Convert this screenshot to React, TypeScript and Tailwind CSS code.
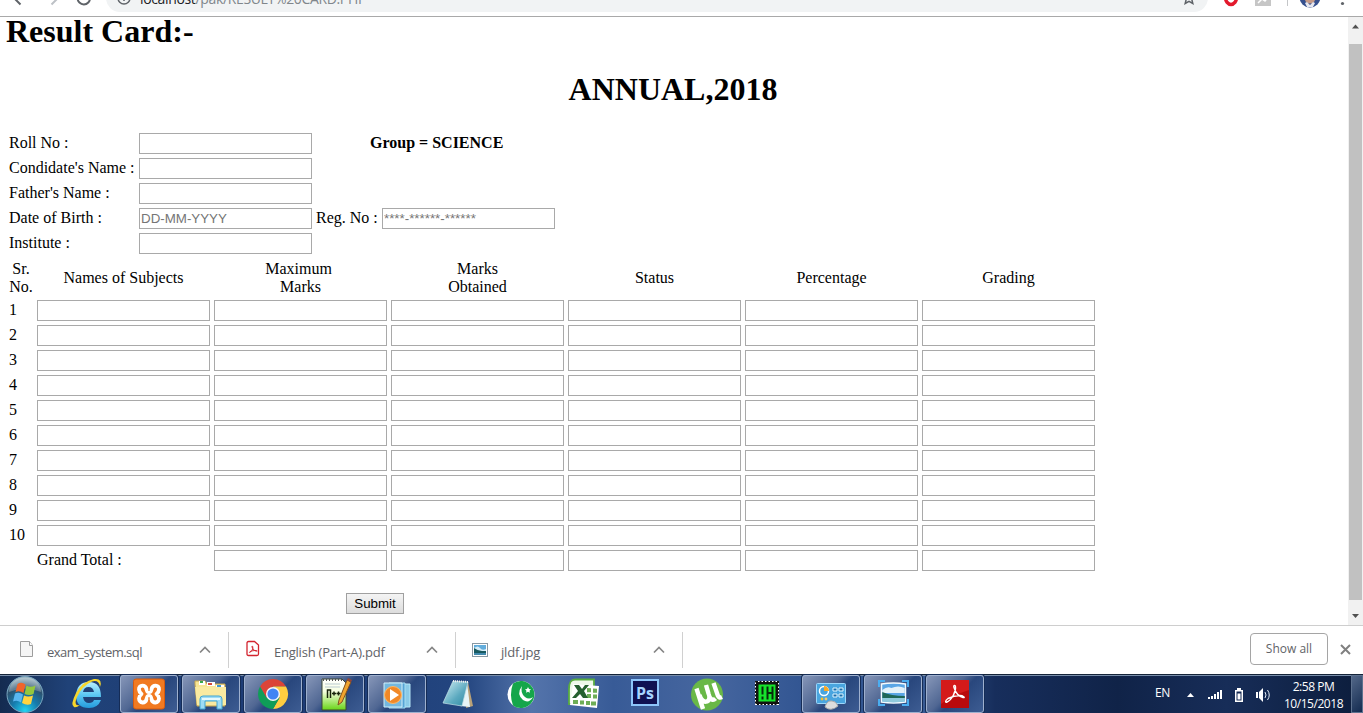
import React from "react";

const inputClass =
  "block h-[21px] w-[173px] rounded-none border border-[#a9a9a9] bg-white px-px font-['Liberation_Sans',sans-serif] text-[13.33px] leading-[17px] text-black outline-none placeholder:text-[#757575]";

function Field({ placeholder }: { placeholder?: string }) {
  return <input type="text" placeholder={placeholder} className={inputClass} />;
}

function BrowserBar() {
  return (
    <header className="flex h-[17px] shrink-0 items-end overflow-hidden border-b border-[#a9a9a9] bg-white">
      <div className="flex h-[38px] w-full shrink-0 items-center">
        <svg width="106" height="38" viewBox="0 -22 106 38" fill="none" strokeWidth="2" className="shrink-0">
          <path d="M20.500 4.500 L14 -2 L20.500 -8.500 M14 -2 H28" stroke="#5f6368" />
          <path d="M51.500 4.500 L58 -2 L51.500 -8.500 M58 -2 H44" stroke="#bdc1c6" />
          <path d="M90 -2 A6.200 6.200 0 1 1 84 -8" stroke="#5f6368" />
        </svg>
        <div className="mt-[2px] flex h-[28px] w-[1102px] shrink-0 items-center rounded-full bg-[#f1f3f4] pl-[11px]">
          <svg width="14" height="14" viewBox="0 0 14 14" fill="none" stroke="#5f6368" strokeWidth="1.5">
            <circle cx="7" cy="7" r="6" />
            <path d="M7 6v4M7 3.500v1.300" />
          </svg>
          <span className="ml-[9px] mt-[1px] whitespace-nowrap font-['Open_Sans',sans-serif] text-[14px] leading-[20px] tracking-[-0.350px] text-[#80868b]">
            <span className="text-[#202124]">localhost</span>/pak/RESULT%20CARD.PHP
          </span>
          <svg width="14" height="14" viewBox="0 0 14 14" fill="none" stroke="#5f6368" strokeWidth="1.500" className="ml-auto mr-[12px]">
            <path d="M7 1l1.800 4 4.200.4-3.200 2.900 1 4.200L7 10.300l-3.800 2.200 1-4.200L1 5.400l4.200-.4z" />
          </svg>
        </div>
        <svg width="155" height="38" viewBox="1208 -22 155 38" className="shrink-0">
          <ellipse cx="1231" cy="-2.500" rx="5.500" ry="7" fill="none" stroke="#e3192c" strokeWidth="3.500" />
          <rect x="1255" y="-10" width="16" height="16" fill="#c6c6c6" />
          <path d="M1258 3l4-4 3 2 4-5" stroke="#fff" strokeWidth="1.500" fill="none" />
          <path d="M1287.500 -10v16" stroke="#c4c6c8" />
          <circle cx="1310" cy="-3" r="10.500" fill="#36508e" />
          <path d="M1303 -4q7-5 14 0l-3 6q-4 3-8 0z" fill="#c59a88" />
          <path d="M1305 3l2-1 3 3 3-3 2 1-2 4h-6z" fill="#e6e7ef" />
          <circle cx="1342.500" cy="3.500" r="1.600" fill="#5f6368" />
          <circle cx="1342.500" cy="-2.500" r="1.600" fill="#5f6368" />
        </svg>
      </div>
    </header>
  );
}

function Scrollbar() {
  return (
    <div className="flex w-[15px] shrink-0 flex-col items-center bg-[#f1f1f1]">
      <svg width="15" height="27" viewBox="0 0 15 27" className="shrink-0">
        <path d="M4 11.500h7L7.500 7.500z" fill="#505050" />
      </svg>
      <div className="w-[13px] flex-1 bg-[#c1c1c1]" />
      <svg width="15" height="25" viewBox="0 0 15 25" className="shrink-0">
        <path d="M4 14h7l-3.500 4z" fill="#505050" />
      </svg>
    </div>
  );
}

const headings = [
  { text: "Sr. No.", className: "" },
  { text: "Names of Subjects", className: "" },
  { text: "Maximum Marks", className: "w-[80px]" },
  { text: "Marks Obtained", className: "w-[80px]" },
  { text: "Status", className: "" },
  { text: "Percentage", className: "" },
  { text: "Grading", className: "" },
];
const serials = [1, 2, 3, 4, 5, 6, 7, 8, 9, 10];
const columns = [0, 1, 2, 3, 4, 5];

function FieldRow({ label, placeholder, children }: { label: string; placeholder?: string; children?: React.ReactNode }) {
  return (
    <div className="flex h-[21px] items-center">
      <label className="w-[130px] whitespace-nowrap pb-[2px]">{label}</label>
      <Field placeholder={placeholder} />
      {children}
    </div>
  );
}

function ResultForm() {
  return (
    <main className="min-w-0 flex-1 font-['Liberation_Serif',serif] text-[16px] leading-[18px] text-black">
      <h1 className="ml-[6px] h-[58px] text-[32px] font-bold leading-[28px]">Result Card:-</h1>
      <h1 className="ml-[-2px] h-[58px] text-center text-[32px] font-bold leading-[28px]">ANNUAL,2018</h1>
      <form onSubmit={(e) => e.preventDefault()} className="pl-[9px]">
        <section className="flex flex-col gap-1">
          <FieldRow label="Roll No :">
            <b className="ml-[58px] pb-[2px]">Group = SCIENCE</b>
          </FieldRow>
          <FieldRow label="Condidate's Name :" />
          <FieldRow label="Father's Name :" />
          <FieldRow label="Date of Birth :" placeholder="DD-MM-YYYY">
            <label className="ml-1 w-[66px] whitespace-nowrap pb-[2px]">Reg. No :</label>
            <Field placeholder="****-******-******" />
          </FieldRow>
          <FieldRow label="Institute :" />
        </section>
        <section className="mt-[6px] grid grid-cols-[24px_repeat(6,173px)] gap-x-1 gap-y-1">
          {headings.map((h) => (
            <div key={h.text} className="flex h-[36px] items-center justify-center text-center">
              {h.text === "Maximum Marks" ? (
                <span className={h.className}>
                  <span className="mr-1">Maximum</span> Marks
                </span>
              ) : (
                <span className={h.className}>{h.text}</span>
              )}
            </div>
          ))}
          {serials.map((n) => (
            <React.Fragment key={n}>
              <span className="flex h-[21px] items-center pb-[2px]">{n}</span>
              {columns.map((c) => (
                <Field key={c} />
              ))}
            </React.Fragment>
          ))}
          <span />
          <span className="flex h-[21px] items-center pb-[2px]">Grand Total :</span>
          {columns.slice(1).map((c) => (
            <Field key={c} />
          ))}
        </section>
        <button className="ml-[337px] mt-[22px] block h-[21px] w-[58px] border border-[#a0a0a0] bg-linear-to-b from-[#f4f4f4] to-[#dddddd] text-center font-['Liberation_Sans',sans-serif] text-[13.330px] leading-[18px]">
          Submit
        </button>
      </form>
    </main>
  );
}

function FileIcon() {
  return (
    <svg width="16" height="18" viewBox="0 0 16 18" fill="#f5f5f5" stroke="#9d9d9d">
      <path d="M1.500 1.500h9l3 4v11h-12z" />
      <path d="M10.500 1.500v4h3" fill="#fff" />
    </svg>
  );
}

function PdfIcon() {
  return (
    <svg width="16" height="18" viewBox="0 0 16 18" fill="none" stroke="#d3242f" strokeWidth="1.300">
      <path d="M3.500 1.500h6l4 3.500v9q0 1.500-1.500 1.500H3.500Q2 15.500 2 14V3q0-1.500 1.500-1.500z" />
      <path d="M4.500 12.500c2.500-1 3.500-3.500 3.300-5.500 0-1.500-1.200-1-.7.2.8 2 2 3.500 4.400 4 1.200.4.800-.8-.5-.7-3 0-7 .8-6.500 2z" strokeWidth="1" />
    </svg>
  );
}

function ImageIcon() {
  return (
    <svg width="16" height="18" viewBox="0 0 16 18">
      <rect x=".5" y="3.500" width="15" height="13" fill="#fff" stroke="#8898a3" />
      <path d="M2 5h12v10H2z" fill="#62addc" />
      <path d="M2 8q4-3 6 0t6 1v2H2z" fill="#d5edf8" />
      <path d="M2 8q4 3 8 3h4v2H2z" fill="#195a60" />
      <path d="M2 13h12v2H2z" fill="#4189ad" />
    </svg>
  );
}

const downloads = [
  { name: "exam_system.sql", icon: <FileIcon />, width: "w-[229px] pl-[19px]", text: "ml-[12px] tracking-[-0.520px]" },
  { name: "English (Part-A).pdf", icon: <PdfIcon />, width: "w-[227px] pl-[16px]", text: "ml-[13px] tracking-[-0.230px]" },
  { name: "jldf.jpg", icon: <ImageIcon />, width: "w-[227px] pl-[16px]", text: "ml-[13px] tracking-[-0.200px]" },
];

function DownloadShelf() {
  return (
    <section className="flex h-[49px] shrink-0 items-center border-t border-[#cecece] bg-white font-['Open_Sans',sans-serif] text-[13px] text-[#5f6368]">
      {downloads.map((d) => (
        <div key={d.name} className={`flex h-[36px] shrink-0 items-center border-r border-[#d0d0d0] ${d.width}`}>
          <span className="-mt-[2px]">{d.icon}</span>
          <span className={`mt-[6px] whitespace-nowrap ${d.text}`}>{d.name}</span>
          <svg width="12" height="8" viewBox="0 0 12 8" fill="none" stroke="#858585" strokeWidth="1.700" className="ml-auto mr-[17px]">
            <path d="M1 6.500l5-5 5 5" />
          </svg>
        </div>
      ))}
      <button className="mb-[2px] ml-auto h-[32px] w-[78px] rounded-[4px] border border-[#a5a5a5] text-[12px] font-medium text-[#5f6368]">
        Show all
      </button>
      <svg width="11" height="11" viewBox="0 0 11 11" stroke="#808080" strokeWidth="2" className="mb-[2px] ml-[12px] mr-[12px]">
        <path d="M1 1l9 9M10 1l-9 9" />
      </svg>
    </section>
  );
}

function StartOrb() {
  return (
    <svg width="38" height="38" viewBox="0 0 38 38">
      <defs>
        <radialGradient id="orb" cx=".5" cy=".95" r=".9">
          <stop offset="0" stopColor="#22d5f2" />
          <stop offset=".4" stopColor="#167cae" />
          <stop offset=".75" stopColor="#2c526f" />
          <stop offset="1" stopColor="#94b0bd" />
        </radialGradient>
      </defs>
      <circle cx="19" cy="19.500" r="18" fill="url(#orb)" stroke="#78a6c0" />
      <path d="M3 17Q4 3 19 2.500 34 3 35 17 19 10 3 17z" fill="#fff" opacity=".25" />
      <path d="M11.500 9q4-2.500 8 .5l-2 8.500q-4-3-8-1z" fill="#f0642b" />
      <path d="M20.500 10.500q4 2.500 9 0l-2 8.500q-4 2-9 0z" fill="#94c83d" />
      <path d="M9 18.500q4-2 8 1l-2 8q-4-3-8-1z" fill="#59b7f1" />
      <path d="M18 20.500q4 2 9 0l-2 8.500q-4 2-9-1z" fill="#ffd440" />
    </svg>
  );
}

function ExplorerE() {
  return (
    <svg width="38" height="38" viewBox="0 0 38 38">
      <defs>
        <linearGradient id="ie" x2="0" y2="1">
          <stop stopColor="#b9efff" />
          <stop offset=".5" stopColor="#5cc8f4" />
          <stop offset="1" stopColor="#249bdc" />
        </linearGradient>
      </defs>
      <path d="M33 22H15q1 6 6 6 4 0 5-3h7q-3 8-12 8-13 0-13-13Q9 7 21 7q12 0 12 15zM15 17h11q-1-5-5.500-5T15 17z" fill="url(#ie)" fillRule="evenodd" />
      <path d="M32 12Q35 3 26 4 15 6 8 18 2 30 6 32q2 1 6-2-7 2-3-8Q14 11 24 6.500q7-2 8 5.500z" fill="#f7d62b" />
    </svg>
  );
}

function XamppIcon() {
  return (
    <svg width="38" height="38" viewBox="0 0 38 38">
      <rect x="3.500" y="4" width="31" height="30" rx="2.500" fill="#f17a21" stroke="#d95b0c" />
      <g fill="none" stroke="#fff" strokeWidth="3.800" strokeLinejoin="round" strokeLinecap="round">
        <path d="M16.500 14.500C16 9 8.500 9.500 9 14.500q.2 2.500 2.500 4.500Q9 21 9 23.500c0 5 7 5.500 7.500.5" />
        <path d="M21.500 14.500C22 9 29.500 9.500 29 14.500q-.2 2.500-2.500 4.500 2.500 2 2.500 4.500c0 5-7 5.500-7.500.5" />
        <path d="M16.500 14.500q0 3 2.500 3t2.500-3M16.500 24q0-3.500 2.500-3.500t2.500 3.500" strokeWidth="3" />
      </g>
    </svg>
  );
}

function FolderIcon() {
  return (
    <svg width="38" height="38" viewBox="0 0 38 38">
      <path d="M3 9V6h10l2 3h18v22H5z" fill="#f7e594" stroke="#c7a850" />
      <path d="M7 6h6v4H7z" fill="#fff" />
      <path d="M8 6h3v2H8z" fill="#39a94c" />
      <path d="M15 7h8v4h-8z" fill="#fff" />
      <path d="M16 8h4v2h-4z" fill="#d4493b" />
      <path d="M24 10h8v3h-8z" fill="#fff" />
      <path d="M25 10h4v2h-4z" fill="#4099d2" />
      <path d="M3 12h31v18H5z" fill="#f9eaa1" />
      <path d="M8 34V24q0-3 3-3h16q3 0 3 3v10h-5v-8H13v8z" fill="#9ddcf5" stroke="#41a6d3" />
      <path d="M10 24h18" stroke="#e5f9ff" strokeWidth="2" />
    </svg>
  );
}

function ChromeIcon() {
  return (
    <svg width="38" height="38" viewBox="0 0 38 38">
      <path d="M6.010 11.500A15 15 0 0 1 32 11.500H19L12.500 22.800z" fill="#db4437" />
      <path d="M32 11.500A15 15 0 0 1 19 34l6.500-11.300L19 11.500z" fill="#ffcd40" />
      <path d="M19 34A15 15 0 0 1 6.010 11.500l6.500 11.200h13z" fill="#0f9d58" />
      <circle cx="19" cy="19" r="7" fill="#f4f6fa" />
      <circle cx="19" cy="19" r="5.600" fill="#4285f4" />
    </svg>
  );
}

function NotepadPlusIcon() {
  return (
    <svg width="38" height="38" viewBox="0 0 38 38">
      <defs>
        <linearGradient id="npp" x2="0" y2="1">
          <stop stopColor="#fff" />
          <stop offset=".4" stopColor="#f6ffe0" />
          <stop offset="1" stopColor="#68d516" />
        </linearGradient>
      </defs>
      <path d="M6 4h20l4 4v27H6z" fill="url(#npp)" stroke="#3c4934" />
      <path d="M7 5h19" stroke="#555" strokeDasharray="1 2" strokeWidth="2" />
      <path d="M9 9h15M9 12h15" stroke="#bacbd1" />
      <path d="M11.500 23v-8h3v8M16 18.500h4M18 16.500v4M20.500 18.500h4M22.500 16.500v4" fill="none" stroke="#17240b" strokeWidth="1.500" />
      <path d="M22 30l1-5L31 5l4 2-9 20z" fill="#efa52e" stroke="#815021" />
      <path d="M31 5l1-2 4 2-1 2z" fill="#984536" />
    </svg>
  );
}

function MediaPlayerIcon() {
  return (
    <svg width="38" height="38" viewBox="0 0 38 38">
      <path d="M15 9h17v23H15z" fill="#8acae7" stroke="#b7e8f8" />
      <path d="M11 8h16v25H11z" fill="#56a3d5" stroke="#a7def3" />
      <path d="M6 8h18v24H6z" fill="#74b8df" stroke="#d1effa" />
      <circle cx="15" cy="20" r="8.500" fill="#f18827" stroke="#ffba67" />
      <path d="M12 14l9 6-9 6z" fill="#fff" />
    </svg>
  );
}

function NotepadIcon() {
  return (
    <svg width="38" height="38" viewBox="0 0 38 38">
      <defs>
        <linearGradient id="notes" x2="1" y2="1">
          <stop stopColor="#d4f1f5" />
          <stop offset=".6" stopColor="#5ba9bf" />
          <stop offset="1" stopColor="#2f8aa3" />
        </linearGradient>
      </defs>
      <path d="M28 7l5 24-7 2z" fill="#b9a278" />
      <path d="M27 7l3 25-10-1z" fill="#e6f4f7" />
      <path d="M13 6l15 1-6 24L3 28z" fill="url(#notes)" stroke="#c3e1e8" strokeWidth=".7" />
      <path d="M13 6l15 1" stroke="#eee" strokeWidth="2" strokeDasharray="1 1" />
    </svg>
  );
}

function FlagIcon() {
  return (
    <svg width="38" height="38" viewBox="0 0 38 38">
      <circle cx="19" cy="19.500" r="13.500" fill="#fff" />
      <path d="M11 8.500a13.500 13.500 0 1 1 0 22q-4-11 0-22z" fill="#15a64a" />
      <path d="M20 11q-6 8 1 14 6 4 10-3-4 3-8 0-5-4-3-11z" fill="#fff" />
      <path d="M26 12l1 2 2 .2-1.500 1.500.5 2-2-1-2 1 .5-2-1.500-1.500 2-.2z" fill="#fff" />
    </svg>
  );
}

function ExcelIcon() {
  return (
    <svg width="38" height="38" viewBox="0 0 38 38">
      <path d="M11 4.500h19V29H5V14Q5 4.500 11 4.500z" fill="#eef9e9" stroke="#59ad41" strokeWidth="1.800" />
      <path d="M9 9l26 2-2 22-27-3z" fill="#fff" />
      <path d="M23 13l4 .3v4h-4zm6 .5l4 .3v4h-4zM23 19h4v4h-4zm6 .5h4v4h-4zM9 25h5v4H9zm7 .5h4v4h-4zm6 .5h4v4h-4zm5 .5h5v4h-5z" fill="#6eae56" />
      <path d="M10 10h5l3 4 3-4h4l-5 6 4 7h-5l-3-4-4 4H8l6-7z" fill="#25602f" />
    </svg>
  );
}

function PhotoshopIcon() {
  return (
    <span className="mb-[3px] flex h-[27px] w-[28px] items-center justify-center border-2 border-[#8dc5fa] bg-[#101253] font-['Open_Sans',sans-serif] text-[16px] font-bold leading-none text-[#a5d4ff]">
      Ps
    </span>
  );
}

function TorrentIcon() {
  return (
    <svg width="38" height="38" viewBox="0 0 38 38">
      <circle cx="19" cy="19.500" r="16" fill="#69b847" />
      <path d="M8.500 13.500L15 34M11.500 20q2.500 8 7.500 6.500 4-2 1.500-8L18 10M21 21q3 6 6.500 2.500M25.500 8l4.500 13q1 2.500 4 1" fill="none" stroke="#fff" strokeWidth="4.400" />
    </svg>
  );
}

function ChipIcon() {
  return (
    <svg width="38" height="38" viewBox="0 0 38 38" className="-ml-[4px] -mt-[3px]">
      <rect x="7" y="7" width="24" height="24" fill="#fff" />
      <rect x="8" y="8" width="22" height="22" fill="#111" stroke="#111" strokeWidth="2" strokeDasharray="2 1.500" />
      <rect x="10.500" y="10.500" width="17" height="17" fill="#16e32c" />
      <path d="M14.500 12.500v8m0 2v3M19.500 12.500v13M24.500 12.500v13M19.500 19h5" stroke="#062b0b" strokeWidth="2" fill="none" />
    </svg>
  );
}

function ControlPanelIcon() {
  return (
    <svg width="38" height="38" viewBox="0 0 38 38">
      <rect x="4.500" y="8.500" width="29" height="20" rx="1" fill="#49a5df" stroke="#9cd7fa" />
      <circle cx="12" cy="16" r="4.500" fill="none" stroke="#fff" strokeWidth="1.500" />
      <path d="M12 16v-5a5 5 0 0 1 5 5z" fill="#f9a927" />
      <path d="M21 13h4v3h-4zm6 0h4v3h-4zm-6 6h4v3h-4zm6 0h4v3h-4z" fill="#1b6caa" stroke="#dff5ff" />
      <circle cx="10" cy="24" r="1.400" fill="#f6be2d" />
      <circle cx="14" cy="24" r="1.400" fill="#fdc963" />
      <path d="M13 32q2-7 7-6 4 0 6 5-7 6-13 1z" fill="#ddd" stroke="#aaa" />
    </svg>
  );
}

function PicturesIcon() {
  return (
    <svg width="38" height="38" viewBox="0 0 38 38" className="-mt-[3px]">
      <path d="M5 13V7h6M28 7h6v6M5 25v6h6M28 31h6v-6" fill="none" stroke="#4aadf0" strokeWidth="2" />
      <path d="M7.500 10q12-2 24 0v18q-12 2-24 0z" fill="#5aa6e6" stroke="#f4fbff" strokeWidth="1.500" />
      <path d="M8.300 16q5-4 9-2 7-3 13.400 0v5H8.300z" fill="#e3f1f9" />
      <path d="M8.300 18q9 4 22.500 4v2H8.300z" fill="#1e6657" />
      <path d="M8.300 24h22.500v3.500q-11 1.500-22.500 0z" fill="#8fc9dc" />
    </svg>
  );
}

function AcrobatIcon() {
  return (
    <svg width="38" height="38" viewBox="0 0 38 38">
      <rect x="5" y="5" width="28" height="28" fill="#b90a0c" />
      <path d="M5 5h28v10Q17 20 5 29z" fill="#d41a1a" />
      <path d="M11 27c5-2 9-11 8.500-15 0-2.500-2.500-2-1.500.500 1.500 5 5 9 9 10 3 .5 0-2-3-2-4 0-8 1-12 3-3 2-3 4.500-1 3.500z" fill="none" stroke="#fff" strokeWidth="1.400" />
    </svg>
  );
}

const taskItems = [
  { id: "ie", icon: <ExplorerE />, open: false },
  { id: "xampp", icon: <XamppIcon />, open: true },
  { id: "files", icon: <FolderIcon />, open: true },
  { id: "chrome", icon: <ChromeIcon />, open: true },
  { id: "npp", icon: <NotepadPlusIcon />, open: true },
  { id: "media", icon: <MediaPlayerIcon />, open: true },
  { id: "notepad", icon: <NotepadIcon />, open: false },
  { id: "flag", icon: <FlagIcon />, open: false },
  { id: "excel", icon: <ExcelIcon />, open: false },
  { id: "photoshop", icon: <PhotoshopIcon />, open: false },
  { id: "torrent", icon: <TorrentIcon />, open: false },
  { id: "chip", icon: <ChipIcon />, open: false },
  { id: "control", icon: <ControlPanelIcon />, open: true },
  { id: "pictures", icon: <PicturesIcon />, open: true },
  { id: "acrobat", icon: <AcrobatIcon />, open: true },
];

function Taskbar() {
  return (
    <footer className="flex h-[39px] shrink-0 border-t border-[#142338] bg-[linear-gradient(90deg,#142b50_0%,#204278_5%,#1d3b75_20%,#23457f_34%,#5474ab_39%,#385b97_45%,#46669f_52%,#2f5390_60%,#385b94_68%,#172e5c_73%,#102348_82%,#172d58_90%,#0c1d3c_100%)] shadow-[inset_0_1px_0_#788da9]">
      <div className="flex w-[56px] items-center pl-[6px]">
        <StartOrb />
      </div>
      {taskItems.map((item) => (
        <div key={item.id} className="flex w-[62px] shrink-0 px-[2px]">
          <div
            className={
              item.open
                ? "flex h-[38px] w-[58px] items-center justify-center rounded-[3px] border border-[#9eb0ce] bg-[linear-gradient(135deg,#8696b8_0%,#506793_42%,#29477d_55%,#3d5c92_100%)] shadow-[0_0_0_1px_#152c56]"
                : "flex h-[38px] w-[58px] items-center justify-center"
            }
          >
            {item.icon}
          </div>
        </div>
      ))}
      <div className="ml-auto flex items-center font-['Open_Sans',sans-serif] text-[12px] leading-[17px] text-white">
        <span className="mb-[3px] w-[31px] text-[12px] tracking-[-0.400px]">EN</span>
        <svg width="90" height="38" viewBox="1186 675 90 38" fill="#fff" className="shrink-0">
          <path d="M1187 697h7l-3.500-4z" />
          <path d="M1208 697h2v2h-2zm3-1h2v3h-2zm3-2h2v5h-2zm3-2h2v7h-2zm3-2h2v9h-2z" />
          <path d="M1237 688h4v2h2v12h-8v-12h2zm-.5 3.500v9h5v-9z" fillRule="evenodd" />
          <path d="M1237.500 693.500h3v6h-3z" />
          <path d="M1256 692h2v6h-2zm3 0l4-4v14l-4-4z" />
          <path d="M1265 692q2 3 0 6M1267.500 690q3.500 5 0 10" fill="none" stroke="#e4edf5" />
        </svg>
        <div className="mt-[2px] flex w-[75px] flex-col items-center whitespace-nowrap tracking-[-0.450px]">
          <span>2:58 PM</span>
          <span>10/15/2018</span>
        </div>
        <div className="h-full w-[12px] border border-[#5d718e] bg-[linear-gradient(135deg,#526788,#142b50)]" />
      </div>
    </footer>
  );
}

export default function App() {
  return (
    <div className="flex h-[713px] w-[1363px] flex-col overflow-hidden bg-white">
      <BrowserBar />
      <div className="flex min-h-0 flex-1">
        <ResultForm />
        <Scrollbar />
      </div>
      <DownloadShelf />
      <Taskbar />
    </div>
  );
}
